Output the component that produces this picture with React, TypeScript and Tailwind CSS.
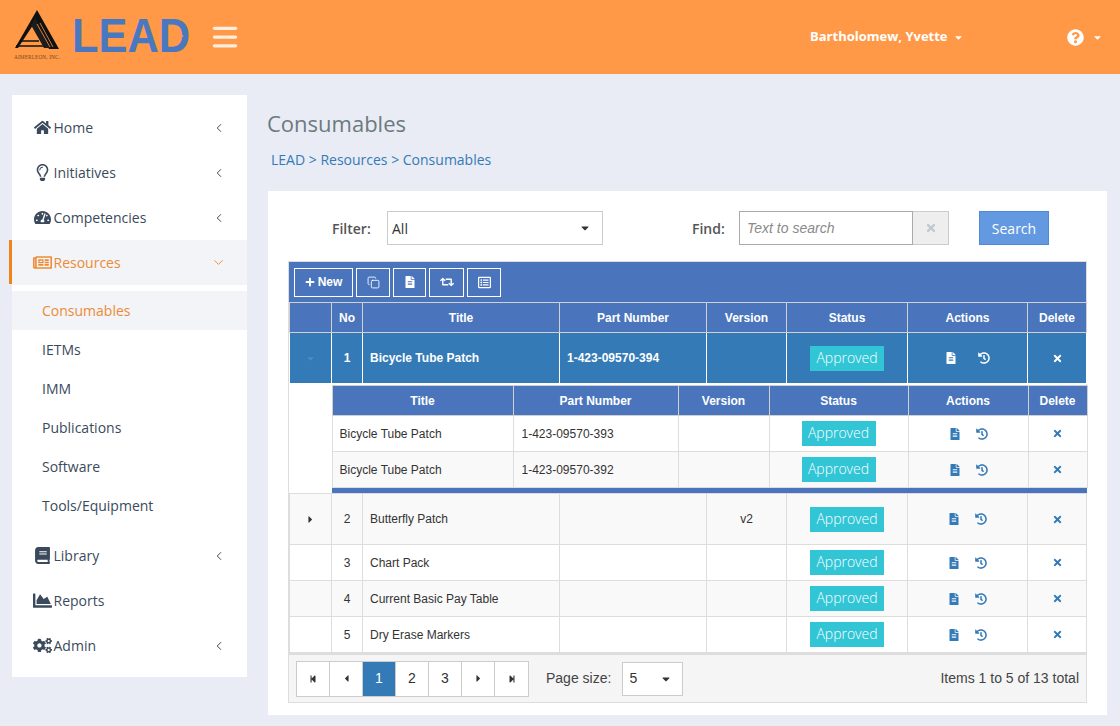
import React from "react";
import { ChevronDown, ChevronLeft, Copy, Menu } from "lucide-react";
import {
  FaBook, FaCaretDown, FaCaretLeft, FaCaretRight, FaChartArea, FaCogs, FaFileAlt, FaHistory, FaHome,
  FaPlus, FaQuestionCircle, FaRegLightbulb, FaRegListAlt, FaRegNewspaper, FaRetweet, FaStepBackward,
  FaStepForward, FaTachometerAlt, FaTimes,
} from "react-icons/fa";

const open = "font-['Open_Sans',sans-serif]";
const arial = "font-['Liberation_Sans',Arial,sans-serif]";

function Logo() {
  return (
    <svg width="190" height="56" viewBox="0 0 190 56" className="shrink-0">
      <path d="M23 1 L45 40 L35 40 L21 13 L4 39 L1 39 Z" fill="#111" />
      <path d="M6 32 H25 M2 37 H30" stroke="#111" strokeWidth="1.6" fill="none" />
      <path d="M21 9 L37 39 H30 L17 16 Z" fill="#1c1c1c" />
      <path d="M23 15 L36 38 M26 14 L39 38" stroke="#ff9947" strokeWidth="0.8" />
      <text x="0" y="50" fontSize="5.4" fontFamily="Liberation Serif" fill="#7a4a20" textLength="46">AIMERLEON, INC.</text>
      <text x="58" y="43" fontSize="48" fontWeight="700" fontFamily="Liberation Sans" fill="#4a78c0" textLength="118" lengthAdjust="spacingAndGlyphs">LEAD</text>
      <path d="M156 21 L170 27 L156 34 Z" fill="#ff9947" />
    </svg>
  );
}

function Side({ icon, label, caret = true, active = false }: { icon: React.ReactNode; label: string; caret?: boolean; active?: boolean }) {
  return (
    <div className={`relative flex h-[45px] items-center pl-[18px] pr-[21px] text-[14px] ${active ? "bg-[#f2f4f7] text-[#ee8a35]" : "text-[#3a4a5c]"}`}>
      {active && <span className="absolute -left-[3px] top-0 h-[44px] w-[3px] bg-[#f0831a]" />}
      <span className="flex w-[24px] shrink-0 justify-center text-[17px]">{icon}</span>
      <span className="ml-[-0.5px] pl-[0px]">{label}</span>
      {caret && (
        <span className="ml-auto">
          {active ? <ChevronDown size={15} strokeWidth={1.5} /> : <ChevronLeft size={14} strokeWidth={1.7} />}
        </span>
      )}
    </div>
  );
}

function Sub({ label, active = false }: { label: string; active?: boolean }) {
  return (
    <div className={`flex h-[39px] items-center pl-[30px] text-[14px] ${active ? "bg-[#f2f4f7] text-[#ee8a35]" : "text-[#3a4a5c]"}`}>{label}</div>
  );
}

function Badge() {
  return (
    <span className={`${open} inline-block h-[25px] w-[74px] bg-[#31c5d6] text-center text-[14px] font-light leading-[23px] text-white`}>Approved</span>
  );
}

function Actions({ light = false, wide = false }: { light?: boolean; wide?: boolean }) {
  return (
    <div className={`flex items-center justify-center text-[12px] ${wide ? "gap-[21px]" : "gap-[15px]"} ${light ? "text-white" : "text-[#337ab7]"}`}>
      <FaFileAlt />
      <FaHistory />
    </div>
  );
}

function Del({ light = false }: { light?: boolean }) {
  return <FaTimes className={`mx-auto text-[11px] ${light ? "text-white" : "text-[#337ab7]"}`} />;
}

const th = "border border-[#d0d0d0] bg-[#4a75bd] text-center align-middle text-[12px] font-bold text-white";
const td = "border border-[#ddd] align-middle text-[12px] text-[#333]";
const sel = "border border-white bg-[#337ab7] align-middle text-[12px] font-bold text-white";

function Row({ no, title, ver = "", tall = false, alt = false, expander = false }: { no: number; title: string; ver?: string; tall?: boolean; alt?: boolean; expander?: boolean }) {
  const bg = alt ? "bg-[#f9f9f9]" : "bg-white";
  return (
    <tr className={`${bg} ${tall ? "h-[51px]" : "h-[36px]"}`}>
      <td className={`${td} text-center`}>{expander && <FaCaretRight className="mx-auto text-[11px] text-[#333]" />}</td>
      <td className={`${td} text-center`}>{no}</td>
      <td className={`${td} px-[7px]`}>{title}</td>
      <td className={td} />
      <td className={`${td} text-center`}>{ver}</td>
      <td className={`${td} text-center`}><div className="flex justify-center"><Badge /></div></td>
      <td className={td}><Actions /></td>
      <td className={td}><Del /></td>
    </tr>
  );
}

function ChildRow({ part, alt = false }: { part: string; alt?: boolean }) {
  return (
    <tr className={`h-[36px] ${alt ? "bg-[#f9f9f9]" : "bg-white"}`}>
      <td className={`${td} px-[7px]`}>Bicycle Tube Patch</td>
      <td className={`${td} px-[8px]`}>{part}</td>
      <td className={td} />
      <td className={td}><div className="flex justify-center"><Badge /></div></td>
      <td className={td}><Actions /></td>
      <td className={td}><Del /></td>
    </tr>
  );
}

function ToolBtn({ children, w }: { children: React.ReactNode; w: string }) {
  return <div className={`flex h-[29px] items-center justify-center border border-white text-white ${w}`}>{children}</div>;
}

function PageBtn({ children, active = false }: { children: React.ReactNode; active?: boolean }) {
  return (
    <div className={`flex h-[34px] w-[33px] items-center justify-center border-r border-[#ccc] text-[14px] last:border-r-0 ${active ? "bg-[#337ab7] text-white" : "bg-white text-[#333]"}`}>{children}</div>
  );
}

export default function App() {
  return (
    <div className={`${open} h-[726px] w-[1120px] overflow-hidden bg-[#e9ecf4]`}>
      <header className="flex h-[74px] items-center bg-[#ff9947] text-white">
        <div className="ml-[14px] flex items-center">
          <Logo />
        </div>
        <Menu size={30} strokeWidth={2.6} className="ml-[6px] text-[#ffeedd]" style={{ transform: "scaleX(1.05)" }} />
        <div className="ml-[570px] flex items-center text-[13px] font-bold">
          <span>Bartholomew, Yvette</span>
          <FaCaretDown className="ml-[5px] text-[11px]" />
        </div>
        <FaQuestionCircle className="ml-[103px] text-[17px]" />
        <FaCaretDown className="ml-[8px] text-[11px]" />
      </header>

      <div className="flex items-start">
        <aside className="ml-[12px] mt-[21px] w-[235px] bg-white pb-[9px] pt-[10px]">
          <Side icon={<FaHome />} label="Home" />
          <Side icon={<FaRegLightbulb />} label="Initiatives" />
          <Side icon={<FaTachometerAlt />} label="Competencies" />
          <Side icon={<FaRegNewspaper className="text-[19px]" />} label="Resources" active />
          <div className="pb-[8px] pt-[6px]">
            <Sub label="Consumables" active />
            <Sub label="IETMs" />
            <Sub label="IMM" />
            <Sub label="Publications" />
            <Sub label="Software" />
            <Sub label="Tools/Equipment" />
          </div>
          <Side icon={<FaBook />} label="Library" />
          <Side icon={<FaChartArea className="text-[19px]" />} label="Reports" caret={false} />
          <Side icon={<FaCogs className="text-[19px]" />} label="Admin" />
        </aside>

        <main className="ml-[20px] w-[840px]">
          <h1 className="mt-[33px] h-[32px] text-[22px] leading-[32px] text-[#6c7a80]">Consumables</h1>
          <div className="ml-[4px] mt-[11px] text-[14px] leading-[20px] text-[#337ab7]">LEAD &gt; Resources &gt; Consumables</div>

          <section className="ml-[1px] mt-[21px] h-[524px] w-[839px] bg-white px-[20px] pt-[20px]">
            <div className="flex h-[34px] items-center">
              <label className="ml-[44px] w-[55px] text-[14px] font-semibold text-[#555]">Filter:</label>
              <div className="flex h-[34px] w-[216px] items-center border border-[#ccc] pl-[4px] pr-[11px] text-[14px] text-[#333]">
                All
                <FaCaretDown className="ml-auto text-[12px]" />
              </div>
              <label className="ml-[89px] w-[47px] text-[14px] font-semibold text-[#555]">Find:</label>
              <div className={`${arial} flex h-[34px] w-[174px] items-center border border-[#aaa] pl-[7px] text-[14px] italic text-[#8a8a8a]`}>Text to search</div>
              <div className="flex h-[34px] w-[36px] items-center justify-center border border-l-0 border-[#ccc] bg-[#eee] text-[12px] text-[#c0c7d0]"><FaTimes /></div>
              <div className="ml-[30px] flex h-[34px] w-[70px] items-center justify-center border border-[#4f8ad8] bg-[#6299e0] text-[14px] text-white">Search</div>
            </div>

            <div className={`${arial} mt-[16px] w-[799px] border border-[#ddd]`}>
              <div className="flex h-[40px] items-center gap-[3px] bg-[#4a75bd] pl-[5px]">
                <ToolBtn w="w-[59px]"><span className="flex items-center gap-[3px] text-[12px] font-bold"><FaPlus className="text-[10px]" />New</span></ToolBtn>
                <ToolBtn w="w-[34px]"><Copy size={13} strokeWidth={1.6} /></ToolBtn>
                <ToolBtn w="w-[33px]"><FaFileAlt className="text-[12px]" /></ToolBtn>
                <ToolBtn w="w-[35px]"><FaRetweet className="text-[14px]" /></ToolBtn>
                <ToolBtn w="w-[34px]"><FaRegListAlt className="text-[13px]" /></ToolBtn>
              </div>
              <table className="w-[797px] table-fixed border-collapse">
                <colgroup>
                  <col className="w-[42px]" /><col className="w-[31px]" /><col className="w-[197px]" /><col className="w-[147px]" />
                  <col className="w-[80px]" /><col className="w-[121px]" /><col className="w-[120px]" /><col className="w-[59px]" />
                </colgroup>
                <thead>
                  <tr className="h-[30px]">
                    <th className={th} /><th className={th}>No</th><th className={th}>Title</th><th className={th}>Part Number</th>
                    <th className={th}>Version</th><th className={th}>Status</th><th className={th}>Actions</th><th className={th}>Delete</th>
                  </tr>
                </thead>
                <tbody>
                  <tr className="h-[51px]">
                    <td className={`${sel} text-center`}><FaCaretDown className="mx-auto text-[11px] text-[#4a8cc7]" /></td>
                    <td className={`${sel} text-center`}>1</td>
                    <td className={`${sel} px-[7px]`}>Bicycle Tube Patch</td>
                    <td className={`${sel} px-[7px]`}>1-423-09570-394</td>
                    <td className={sel} />
                    <td className={sel}><div className="flex justify-center"><Badge /></div></td>
                    <td className={sel}><Actions light wide /></td>
                    <td className={sel}><Del light /></td>
                  </tr>
                  <tr>
                    <td className="bg-white p-0" />
                    <td colSpan={7} className="p-0 pt-[1px]">
                      <table className="w-full table-fixed border-collapse">
                        <colgroup>
                          <col className="w-[181px]" /><col className="w-[165px]" /><col className="w-[91px]" /><col className="w-[139px]" /><col className="w-[120px]" /><col className="w-[59px]" />
                        </colgroup>
                        <thead>
                          <tr className="h-[30px]">
                            <th className={th}>Title</th><th className={th}>Part Number</th><th className={th}>Version</th>
                            <th className={th}>Status</th><th className={th}>Actions</th><th className={th}>Delete</th>
                          </tr>
                        </thead>
                        <tbody>
                          <ChildRow part="1-423-09570-393" />
                          <ChildRow part="1-423-09570-392" alt />
                        </tbody>
                      </table>
                      <div className="h-[5px] bg-[#4a75bd]" />
                    </td>
                  </tr>
                  <Row no={2} title="Butterfly Patch" ver="v2" tall alt expander />
                  <Row no={3} title="Chart Pack" />
                  <Row no={4} title="Current Basic Pay Table" alt />
                  <Row no={5} title="Dry Erase Markers" />
                </tbody>
              </table>
              <div className="flex h-[49px] items-center border-t-2 border-[#ddd] bg-[#f5f5f5] pl-[7px] pr-[7px]">
                <div className="flex border border-[#ccc]">
                  <PageBtn><FaStepBackward className="text-[8px]" /></PageBtn>
                  <PageBtn><FaCaretLeft className="text-[11px]" /></PageBtn>
                  <PageBtn active>1</PageBtn>
                  <PageBtn>2</PageBtn>
                  <PageBtn>3</PageBtn>
                  <PageBtn><FaCaretRight className="text-[11px]" /></PageBtn>
                  <PageBtn><FaStepForward className="text-[8px]" /></PageBtn>
                </div>
                <span className="ml-[17px] text-[14px] text-[#444]">Page size:</span>
                <div className="ml-[11px] flex h-[34px] w-[61px] items-center border border-[#ccc] bg-white pl-[6px] pr-[10px] text-[14px] text-[#333]">
                  5
                  <FaCaretDown className="ml-auto text-[12px]" />
                </div>
                <span className="ml-auto text-[14px] text-[#444]">Items 1 to 5 of 13 total</span>
              </div>
            </div>
          </section>
        </main>
      </div>
    </div>
  );
}
